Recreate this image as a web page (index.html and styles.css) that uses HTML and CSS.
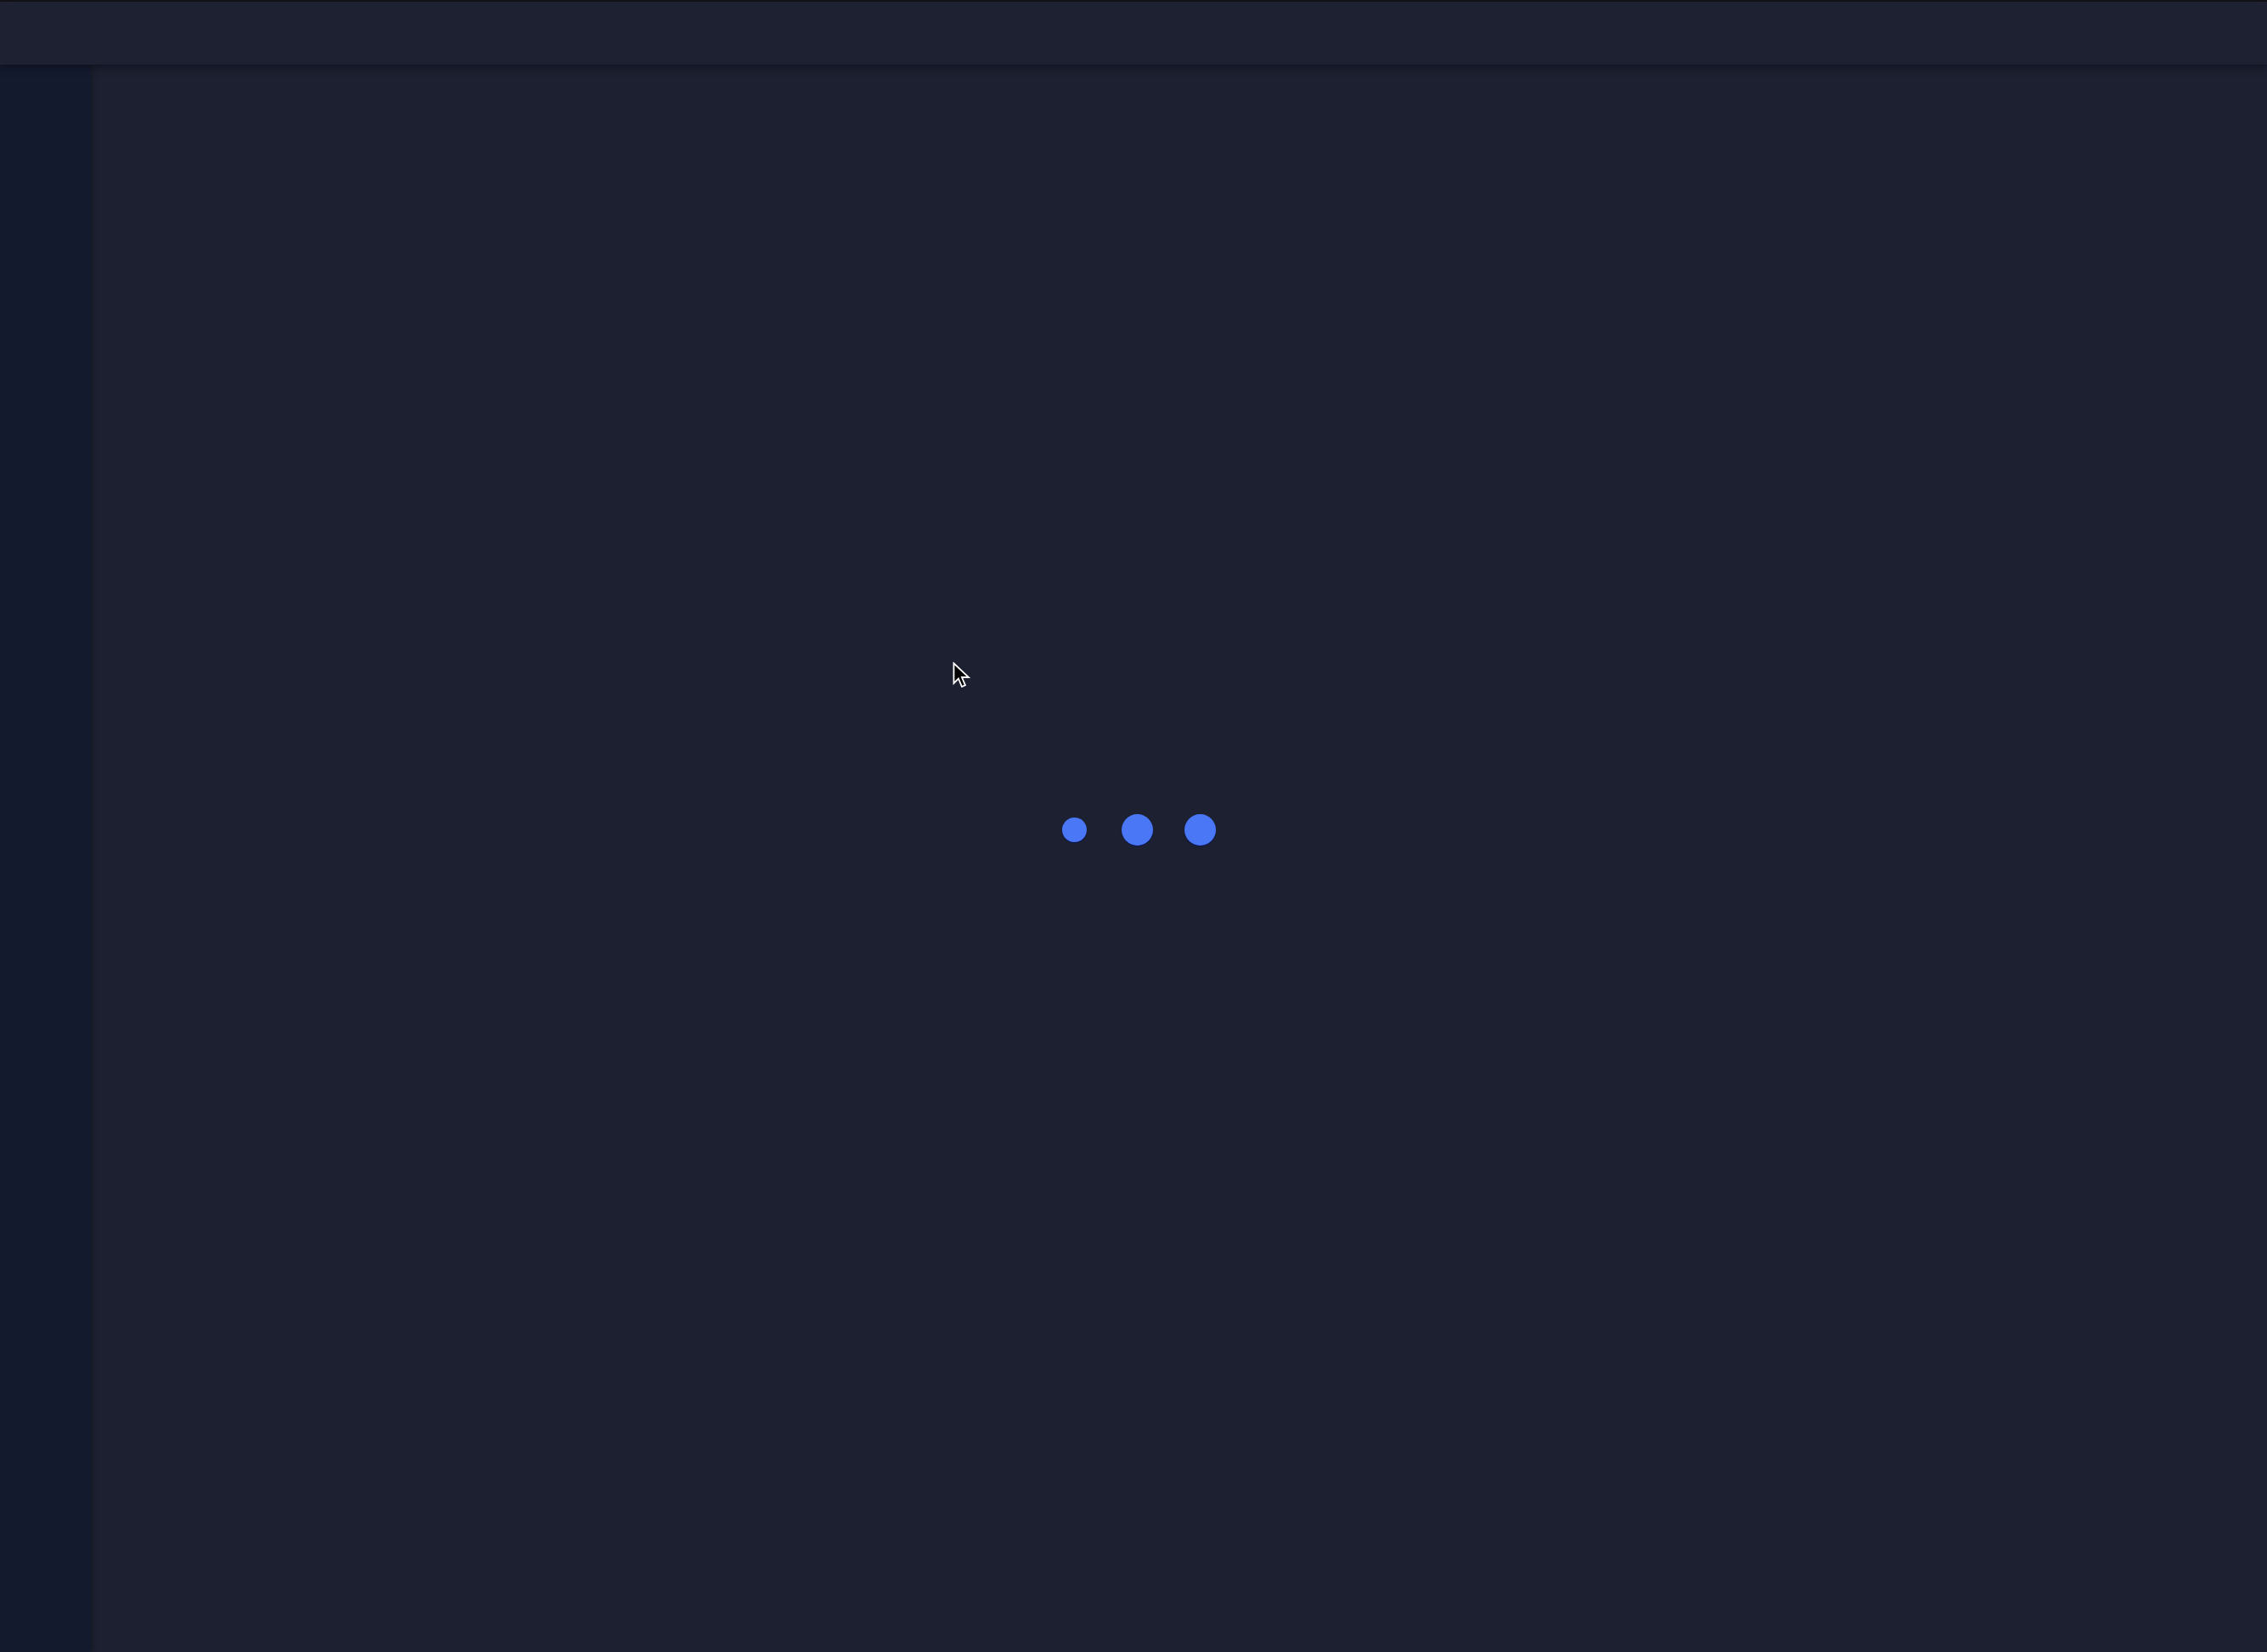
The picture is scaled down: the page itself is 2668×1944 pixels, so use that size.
FILE: index.html
```html
<!DOCTYPE html>
<html lang="en">
<head>
<meta charset="utf-8">
<title>Loading</title>
<link rel="stylesheet" href="styles.css">
</head>
<body>
<div class="app">
  <header class="topbar"></header>
  <div class="body">
    <aside class="sidebar"></aside>
    <main class="main">
      <div class="loader">
        <span class="dot dot-small"></span>
        <span class="dot"></span>
        <span class="dot"></span>
      </div>
    </main>
  </div>
  <svg class="cursor" width="22" height="34" viewBox="0 0 22 34">
    <path d="M1.5 1.5 L1.5 25 L7 19.5 L11 29 L15 27.3 L11 18 L19 18 Z" fill="#000" stroke="#fff" stroke-width="1.8" stroke-linejoin="miter"/>
  </svg>
</div>
</body>
</html>
```
FILE: styles.css
```css
html, body {
  margin: 0;
  padding: 0;
  width: 100%;
  height: 100%;
  background: #1c2030;
  font-family: "Liberation Sans", Arial, sans-serif;
  overflow: hidden;
}
.app {
  position: relative;
  height: 100vh;
  display: flex;
  flex-direction: column;
  border-top: 2px solid #121316;
  box-sizing: border-box;
}
.topbar {
  height: 74px;
  flex: 0 0 74px;
  background: #1e2131;
  box-shadow: 0 3px 8px rgba(8, 10, 18, 0.55);
  position: relative;
  z-index: 2;
}
.body {
  flex: 1;
  display: flex;
  min-height: 0;
}
.sidebar {
  width: 106px;
  flex: 0 0 106px;
  background: #141a2e;
  box-shadow: 2px 0 6px rgba(8, 10, 18, 0.35);
  position: relative;
  z-index: 1;
}
.main {
  flex: 1;
  background: #1c2030;
  display: flex;
  justify-content: center;
  padding-right: 106px;
}
.loader {
  margin-top: 880px;
  margin-left: 12px;
  height: 40px;
  display: flex;
  align-items: center;
  gap: 37px;
}
.dot {
  width: 37px;
  height: 37px;
  border-radius: 50%;
  background: #4a77f6;
  box-shadow: 0 1px 1px rgba(10, 20, 90, 0.9);
}
.dot-small {
  width: 29px;
  height: 29px;
  margin-right: 4px;
}
.cursor {
  position: absolute;
  left: 1121px;
  top: 777px;
  z-index: 5;
}
```
